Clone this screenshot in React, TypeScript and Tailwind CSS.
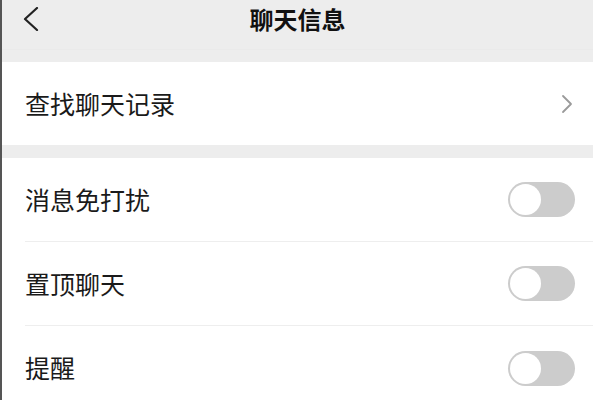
import React from 'react';

const font = { fontFamily: '"Noto Sans CJK SC", "Noto Sans", sans-serif' };

// Toggle switch in its "off" state
const Toggle = () => (
  <div className="w-[67px] h-[35px] rounded-full bg-[#cccccc] p-[2px] flex items-center">
    <div className="w-[31px] h-[31px] rounded-full bg-white" />
  </div>
);

const ChevronRight = () => (
  <svg width="12" height="20" viewBox="0 0 12 20" fill="none">
    <path d="M2 2 L10 10 L2 18" stroke="#9a9a9a" strokeWidth="1.8" strokeLinecap="round" strokeLinejoin="round" />
  </svg>
);

const ChevronLeft = () => (
  <svg width="16" height="24" viewBox="0 0 16 24" fill="none">
    <path d="M14 1 L2 12 L14 23" stroke="#222" strokeWidth="2.2" strokeLinecap="round" strokeLinejoin="round" />
  </svg>
);

const switchRows = ['消息免打扰', '置顶聊天', '提醒'];

export default function App() {
  return (
    <div className="w-[593px] h-[400px] overflow-hidden bg-[#ededed] border-l-2 border-[#555]" style={font}>
      <div className="h-[50px] pb-3 flex items-center relative border-b border-[#eaeaea]">
        <div className="pl-[21px] flex items-center">
          <ChevronLeft />
        </div>
        <div className="absolute left-0 right-0 top-0 h-[38px] flex items-center justify-center text-[24px] font-semibold text-[#111] pointer-events-none">
          聊天信息
        </div>
      </div>
      <div className="h-[12px]" />
      <div className="bg-white h-[83px] flex items-center justify-between pl-[23px] pr-[20px]">
        <span className="text-[25px] text-[#1a1a1a]">查找聊天记录</span>
        <ChevronRight />
      </div>
      <div className="h-[13px]" />
      <div className="bg-white">
        {switchRows.map((label, i) => (
          <div key={label} className="pl-[23px]">
            <div className={`h-[84px] flex items-center justify-between pr-[18px] ${i < switchRows.length - 1 ? 'border-b border-[#eeeeee]' : ''}`}>
              <span className="text-[25px] text-[#1a1a1a]">{label}</span>
              <Toggle />
            </div>
          </div>
        ))}
      </div>
    </div>
  );
}
